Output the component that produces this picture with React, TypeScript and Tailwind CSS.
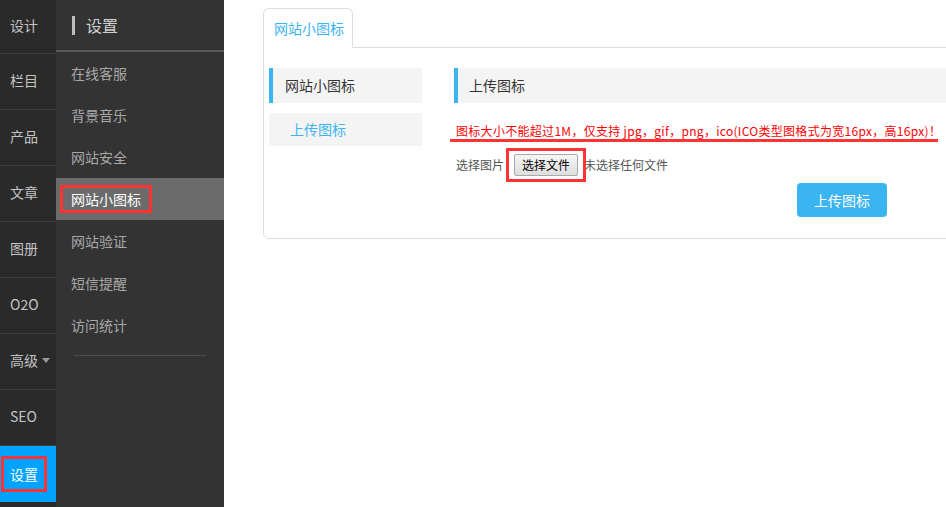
import React from 'react';

const font = { fontFamily: '"Noto Sans CJK SC", "Noto Sans", sans-serif' };

const mainNav = ['设计', '栏目', '产品', '文章', '图册', 'O2O', '高级', 'SEO'];
const subNav = ['在线客服', '背景音乐', '网站安全', '网站小图标', '网站验证', '短信提醒', '访问统计'];

const App: React.FC = () => {
  return (
    <div className="flex h-screen w-full overflow-hidden bg-white" style={font}>
      {/* main nav */}
      <div className="w-[56px] shrink-0 bg-[#2a2a2a]">
        {mainNav.map((item, i) => (
          <div
            key={item}
            className={`flex items-center border-b border-[#3e3e3e] pb-[2px] pl-[10px] text-[14px] text-[#c4c4c4] ${
              i === 0 ? 'h-[54px]' : 'h-[56px]'
            }`}
          >
            {item}
            {item === '高级' && (
              <span className="ml-[4px] h-0 w-0 border-x-[4px] border-t-[5px] border-x-transparent border-t-[#9a9a9a]" />
            )}
          </div>
        ))}
        <div className="flex h-[56px] items-center bg-[#00a3ff] pl-[1px]">
          <span className="border-[3px] border-[#f33] px-[6px] text-[14px] leading-[30px] text-white">
            设置
          </span>
        </div>
      </div>

      {/* sub nav */}
      <div className="w-[168px] shrink-0 bg-[#333333]">
        <div className="flex h-[52px] items-center border-b-2 border-[#595959] pl-[16px]">
          <span className="mr-[11px] h-[19px] w-[3px] bg-[#bdbdbd]" />
          <span className="text-[16px] text-[#d0d0d0]">设置</span>
        </div>
        {subNav.map((item) =>
          item === '网站小图标' ? (
            <div key={item} className="flex h-[42px] items-center bg-[#6b6b6b] pl-[4px]">
              <span className="border-[3px] border-[#f33] px-[8px] text-[14px] leading-[22px] text-white">
                {item}
              </span>
            </div>
          ) : (
            <div key={item} className="flex h-[42px] items-center pl-[15px] text-[14px] text-[#a8a8a8]">
              {item}
            </div>
          ),
        )}
        <div className="ml-[18px] mt-[9px] h-px w-[132px] bg-[#4c4c4c]" />
      </div>

      {/* content */}
      <div className="min-w-0 flex-1 overflow-hidden pl-[39px] pt-[8px]">
        <div className="w-[760px]">
          <div className="relative z-10 -mb-px flex h-[40px] w-[90px] items-center rounded-t-[6px] border border-b-white border-[#dddddd] bg-white pl-[10px] text-[14px] text-[#3bb4f2]">
            网站小图标
          </div>
          <div className="flex gap-[32px] rounded-bl-[6px] border border-[#dddddd] pb-[21px] pl-[5px] pt-[20px]">
            <div className="w-[153px] shrink-0">
              <div className="flex h-[35px] items-center border-l-4 border-[#3bb4f2] bg-[#f4f4f4] pl-[12px] text-[14px] text-[#333]">
                网站小图标
              </div>
              <div className="mt-[10px] flex h-[33px] items-center bg-[#f4f4f4] pl-[21px] text-[14px] text-[#3bb4f2]">
                上传图标
              </div>
            </div>

            <div className="flex-1">
              <div className="flex h-[35px] items-center border-l-4 border-[#3bb4f2] bg-[#f4f4f4] pl-[11px] text-[14px] text-[#333]">
                上传图标
              </div>
              <div className="-ml-[4px] mt-[19px] w-[488px] whitespace-nowrap border-b-[3px] border-[#f33] pl-[6px] text-[12px] leading-[17px] tracking-[0.3px] text-[#f00]">
                图标大小不能超过1M，仅支持 jpg，gif，png，ico(ICO类型图格式为宽16px，高16px)！
              </div>
              <div className="mt-[12px] flex items-center pl-[2px] text-[12px] text-[#555]">
                <span>选择图片：</span>
                <span className="relative -ml-[2px]">
                  <span className="flex h-[22px] w-[64px] items-center justify-center rounded-[2px] border border-[#a9a9a9] bg-gradient-to-b from-[#f6f6f6] to-[#dedede] text-[12px] text-black">
                    选择文件
                  </span>
                  <span className="absolute -inset-x-[8px] -inset-y-[6px] border-[3px] border-[#f33]" />
                </span>
                <span className="ml-[6px]">未选择任何文件</span>
              </div>
              <button className="ml-[343px] mt-[7px] flex h-[34px] w-[90px] items-center justify-center rounded-[4px] bg-[#3bb4f2] text-[14px] text-white">
                上传图标
              </button>
            </div>
          </div>
        </div>
      </div>
    </div>
  );
};

export default App;
